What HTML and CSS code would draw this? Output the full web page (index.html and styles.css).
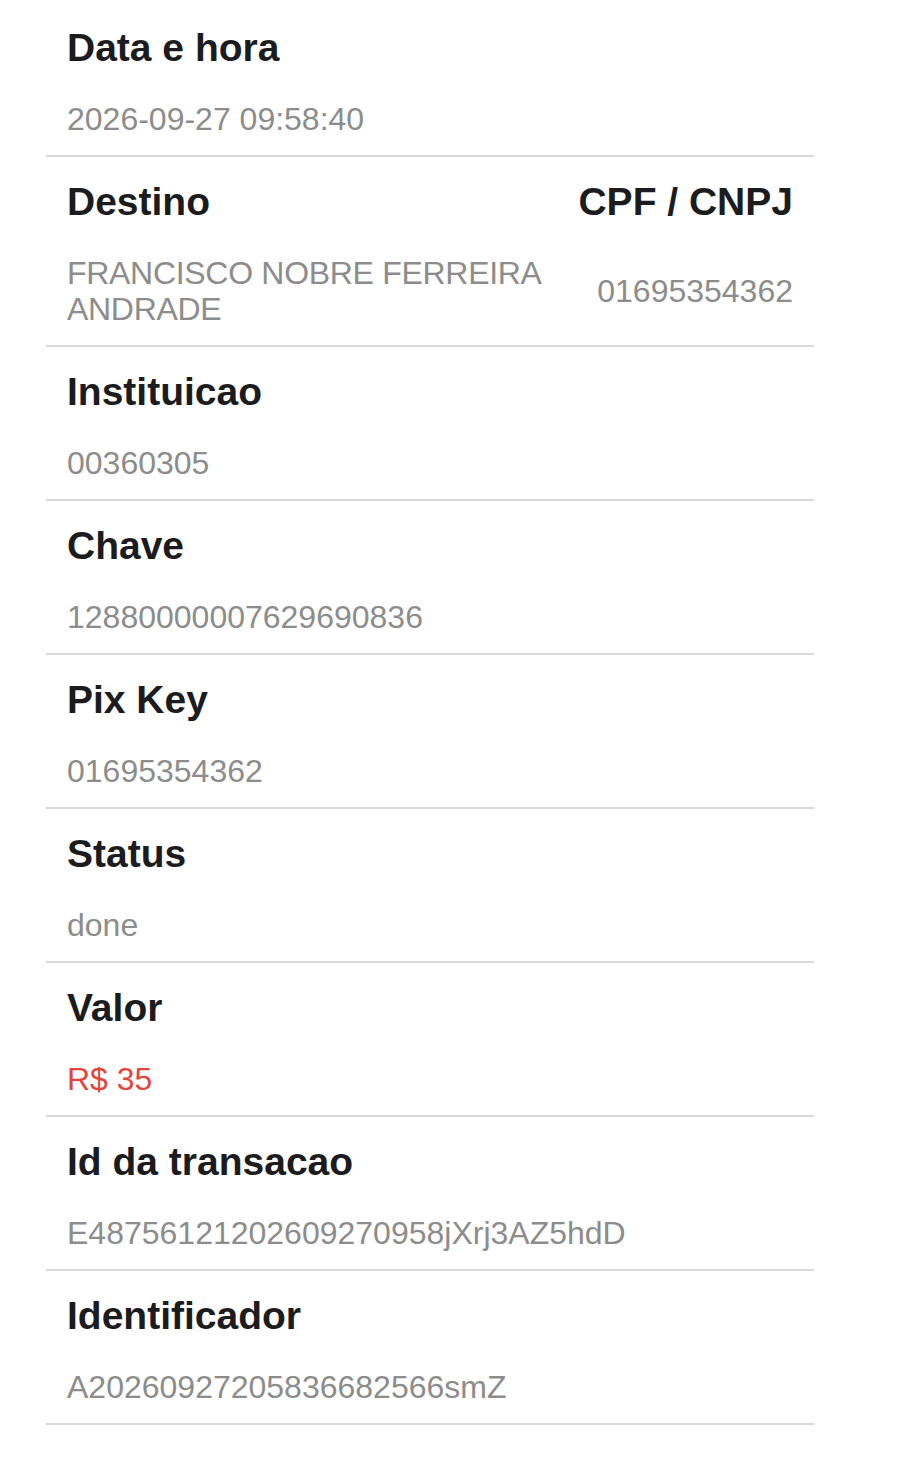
FILE: index.html
```html
<!DOCTYPE html>
<html lang="pt">
<head>
    <meta charset="UTF-8">
    <meta name="viewport" content="width=device-width, initial-scale=1.0">
    <title>Detalhes da transacao</title>
    <link rel="stylesheet" href="styles.css">
</head>
<body>
    <main class="details">
        <div class="row">
            <h2 class="label">Data e hora</h2>
            <p class="value">2026-09-27 09:58:40</p>
        </div>

        <div class="row row-split">
            <h2 class="label">Destino</h2>
            <h2 class="label label-right">CPF / CNPJ</h2>
            <p class="value value-name">FRANCISCO NOBRE FERREIRA ANDRADE</p>
            <p class="value value-right">01695354362</p>
        </div>

        <div class="row">
            <h2 class="label">Instituicao</h2>
            <p class="value">00360305</p>
        </div>

        <div class="row">
            <h2 class="label">Chave</h2>
            <p class="value">12880000007629690836</p>
        </div>

        <div class="row">
            <h2 class="label">Pix Key</h2>
            <p class="value">01695354362</p>
        </div>

        <div class="row">
            <h2 class="label">Status</h2>
            <p class="value">done</p>
        </div>

        <div class="row">
            <h2 class="label">Valor</h2>
            <p class="value value-money">R$ 35</p>
        </div>

        <div class="row">
            <h2 class="label">Id da transacao</h2>
            <p class="value">E48756121202609270958jXrj3AZ5hdD</p>
        </div>

        <div class="row">
            <h2 class="label">Identificador</h2>
            <p class="value">A20260927205836682566smZ</p>
        </div>
    </main>
</body>
</html>
```

FILE: styles.css
```css
body {
    font-family: 'Liberation Sans', Arial, sans-serif;
    background-color: #fff;
    color: #1c1c1e;
    margin: 0;
    padding: 0;
}

.details {
    width: 768px;
    margin-left: 46px;
    padding-top: 3px;
}

.row {
    padding: 22px 21px 18px;
    border-bottom: 2px solid #d9d9d9;
}

.label {
    margin: 0;
    font-size: 39px;
    line-height: 46px;
    font-weight: bold;
    color: #1c1c1e;
}

.value {
    margin: 30px 0 0;
    font-size: 32px;
    line-height: 36px;
    color: #8c8c8c;
}

.value-money {
    color: #e2453a;
}

.row-split {
    display: grid;
    grid-template-columns: 1fr auto;
    column-gap: 16px;
}

.value-name {
    letter-spacing: -0.3px;
}

.label-right,
.value-right {
    text-align: right;
}

.value-right {
    align-self: center;
}
```
